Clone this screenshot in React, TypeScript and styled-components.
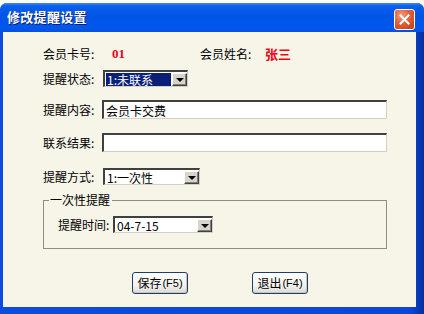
import React from 'react';
import styled, { createGlobalStyle } from 'styled-components';

const Global = createGlobalStyle`
  html, body { margin: 0; padding: 0; background: #ffffff; }
  body { font-family: "Noto Sans CJK SC", "Liberation Sans", sans-serif; font-size: 12px; color: #000; }
`;

const Page = styled.div`
  width: 424px;
  height: 314px;
  overflow: hidden;
  display: flex;
  flex-direction: column;
  background: #ffffff;
`;

const TopStrip = styled.div`
  height: 3px;
  flex: none;
  background: #ffffff;
`;

const Win = styled.div`
  flex: 1;
  display: flex;
  flex-direction: column;
  border-radius: 7px 7px 0 0;
  background: linear-gradient(to right, #0b4be0 0, #0a46d9 97%, #07309a 100%);
  overflow: hidden;
`;

const TitleBar = styled.div`
  height: 29px;
  flex: none;
  display: flex;
  align-items: flex-start;
  justify-content: space-between;
  padding: 0 9px 0 7px;
  background: linear-gradient(to bottom, #3d8cf6 0%, #0a5fec 10%, #0055e6 45%, #0158ec 85%, #0a4fdc 100%);
`;

const Title = styled.div`
  margin-top: 6px;
  color: #ffffff;
  font-weight: bold;
  font-size: 13px;
  line-height: 16px;
  letter-spacing: 0.3px;
  text-shadow: 1px 1px 0 #0a1f6e;
`;

const CloseBtn = styled.div`
  margin-top: 6px;
  width: 19px;
  height: 19px;
  border: 1px solid #ffffff;
  border-radius: 3px;
  background: radial-gradient(circle at 35% 30%, #f0a080 0%, #e0603a 45%, #c23a10 100%);
  display: flex;
  align-items: center;
  justify-content: center;
`;

const Client = styled.div`
  margin: 0 8px 0 3px;
  height: 275px;
  flex: none;
  background: #f7f4e8;
  display: flex;
  flex-direction: column;
  padding-top: 13px;
  box-sizing: border-box;
`;

const Row = styled.div<{ $top: number; $left?: number }>`
  display: flex;
  align-items: center;
  margin-top: ${p => p.$top}px;
  padding-left: ${p => p.$left ?? 40}px;
`;

const Label = styled.span<{ $w: number }>`
  width: ${p => p.$w}px;
  flex: none;
  line-height: 17px;
  white-space: nowrap;
`;

const RedValue = styled.span<{ $w?: number }>`
  ${p => (p.$w ? `width: ${p.$w}px;` : '')}
  flex: none;
  color: #e8001c;
  font-weight: bold;
  font-family: "Liberation Serif", "Noto Sans CJK SC", serif;
  font-size: 13px;
  line-height: 17px;
`;

const RedName = styled.span`
  color: #f00010;
  font-weight: bold;
  font-size: 13px;
  line-height: 17px;
`;

const Sunken = styled.div<{ $w: number; $h: number }>`
  width: ${p => p.$w}px;
  height: ${p => p.$h}px;
  box-sizing: border-box;
  flex: none;
  background: #ffffff;
  border-top: 2px solid #404040;
  border-left: 2px solid #404040;
  border-bottom: 1px solid #d4d0c8;
  border-right: 1px solid #d4d0c8;
  box-shadow: inset -1px -1px 0 #ffffff;
  display: flex;
  align-items: center;
  overflow: hidden;
`;

const FieldText = styled.span`
  padding-left: 2px;
  line-height: 15px;
  white-space: nowrap;
`;

const ComboText = styled.span<{ $selected?: boolean }>`
  flex: 1;
  margin: 1px;
  padding-left: 1px;
  line-height: 13px;
  white-space: nowrap;
  color: ${p => (p.$selected ? '#ffffff' : '#000000')};
  background: ${p => (p.$selected ? '#0a1f78' : 'transparent')};
`;

const DropBtn = styled.div`
  width: 15px;
  height: 13px;
  flex: none;
  box-sizing: border-box;
  background: #d8d4cc;
  border-top: 1px solid #ffffff;
  border-left: 1px solid #ffffff;
  border-right: 1px solid #404040;
  border-bottom: 1px solid #404040;
  box-shadow: inset -1px -1px 0 #808080;
  display: flex;
  align-items: center;
  justify-content: center;
`;

const Arrow = styled.div`
  width: 0;
  height: 0;
  border-left: 4px solid transparent;
  border-right: 4px solid transparent;
  border-top: 4px solid #000000;
  margin-top: 1px;
`;

const Group = styled.div`
  position: relative;
  margin: 15px 0 0 40px;
  width: 344px;
  height: 49px;
  box-sizing: border-box;
  border: 1px solid #8e8e86;
  padding-top: 15px;
`;

const Legend = styled.span`
  position: absolute;
  top: -9px;
  left: 5px;
  padding: 0 2px 0 1px;
  background: #f7f4e8;
  line-height: 16px;
`;

const ButtonRow = styled.div`
  display: flex;
  margin-top: 23px;
  padding-left: 129px;
  gap: 64px;
`;

const Button = styled.div`
  width: 56px;
  height: 22px;
  box-sizing: border-box;
  border: 1px solid #1d3c70;
  border-radius: 3px;
  background: linear-gradient(to bottom, #ffffff 0%, #f3f2ed 60%, #dcdbd2 100%);
  box-shadow: inset -1px -1px 0 #c9c6b8;
  display: flex;
  align-items: center;
  justify-content: center;
  line-height: 16px;
  white-space: nowrap;
`;

const Small = styled.span`
  font-family: "Liberation Sans", sans-serif;
  font-size: 11px;
  margin-left: 1px;
`;

function Combo({ w, text, selected }: { w: number; text: string; selected?: boolean }) {
  return (
    <Sunken $w={w} $h={17}>
      <ComboText $selected={selected}>{text}</ComboText>
      <DropBtn>
        <Arrow />
      </DropBtn>
    </Sunken>
  );
}

export default function App() {
  return (
    <Page>
      <Global />
      <TopStrip />
      <Win>
        <TitleBar>
          <Title>修改提醒设置</Title>
          <CloseBtn>
            <svg width="11" height="11" viewBox="0 0 11 11">
              <path d="M1.5 1.5 L9.5 9.5 M9.5 1.5 L1.5 9.5" stroke="#ffffff" strokeWidth="2" strokeLinecap="square" />
            </svg>
          </CloseBtn>
        </TitleBar>
        <Client>
          <Row $top={0}>
            <Label $w={69}>会员卡号:</Label>
            <RedValue $w={88}>01</RedValue>
            <Label $w={65}>会员姓名:</Label>
            <RedName>张三</RedName>
          </Row>
          <Row $top={8}>
            <Label $w={60}>提醒状态:</Label>
            <Combo w={85} text="1:未联系" selected />
          </Row>
          <Row $top={13}>
            <Label $w={59}>提醒内容:</Label>
            <Sunken $w={285} $h={19}>
              <FieldText>会员卡交费</FieldText>
            </Sunken>
          </Row>
          <Row $top={14}>
            <Label $w={59}>联系结果:</Label>
            <Sunken $w={285} $h={19} />
          </Row>
          <Row $top={16}>
            <Label $w={60}>提醒方式:</Label>
            <Combo w={97} text="1:一次性" />
          </Row>
          <Group>
            <Legend>一次性提醒</Legend>
            <Row $top={0} $left={14}>
              <Label $w={55}>提醒时间:</Label>
              <Combo w={100} text="04-7-15" />
            </Row>
          </Group>
          <ButtonRow>
            <Button>保存<Small>(F5)</Small></Button>
            <Button>退出<Small>(F4)</Small></Button>
          </ButtonRow>
        </Client>
      </Win>
    </Page>
  );
}
